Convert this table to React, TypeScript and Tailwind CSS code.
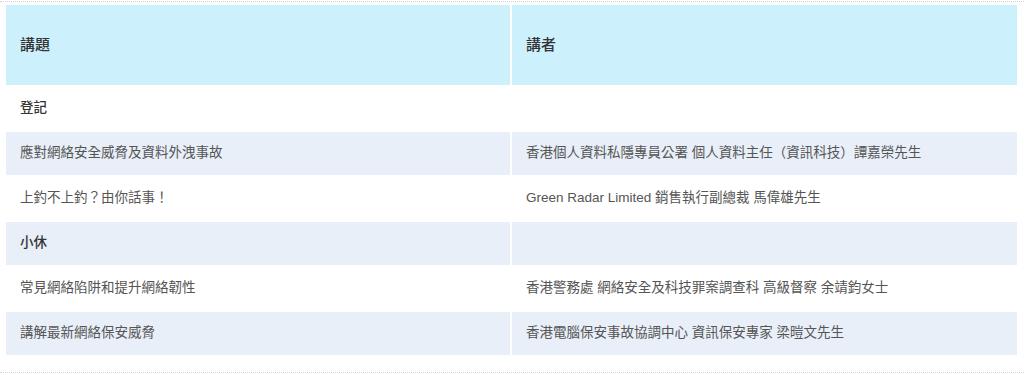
const rows: { topic: string; speaker: string; label?: boolean }[] = [
  { topic: "登記", speaker: "", label: true },
  { topic: "應對網絡安全威脅及資料外洩事故", speaker: "香港個人資料私隱專員公署 個人資料主任（資訊科技）譚嘉榮先生" },
  { topic: "上釣不上釣？由你話事！", speaker: "Green Radar Limited 銷售執行副總裁 馬偉雄先生" },
  { topic: "小休", speaker: "", label: true },
  { topic: "常見網絡陷阱和提升網絡韌性", speaker: "香港警務處 網絡安全及科技罪案調查科 高級督察 余靖鈞女士" },
  { topic: "講解最新網絡保安威脅", speaker: "香港電腦保安事故協調中心 資訊保安專家 梁暟文先生" },
];

export default function App() {
  return (
    <main
      className="h-[375px] w-[1024px] overflow-hidden bg-white pt-px"
      style={{ fontFamily: '"Liberation Sans", "Noto Sans CJK TC", sans-serif' }}
    >
      <div className="border-t border-dotted border-[#d4d4d4]" />
      <table className="ml-[4px] mt-px w-[1015px] table-fixed border-separate border-spacing-[2px]">
        <thead>
          <tr>
            <th className="h-[80px] w-[504px] bg-[#cdf0fd] px-[14px] text-left text-[15px] font-medium text-[#333]">講題</th>
            <th className="h-[80px] bg-[#cdf0fd] px-[14px] text-left text-[15px] font-medium text-[#333]">講者</th>
          </tr>
        </thead>
        <tbody>
          {rows.map((row, i) => (
            <tr key={i} className={i % 2 === 1 ? "bg-[#e8eff8]" : "bg-white"}>
              <td
                className={
                  row.label
                    ? "h-[43px] px-[14px] text-[13.5px] font-medium text-[#333]"
                    : "h-[43px] px-[14px] text-[13.5px] text-[#555]"
                }
              >
                {row.topic}
              </td>
              <td className="h-[43px] px-[14px] text-[13.5px] text-[#555]">{row.speaker}</td>
            </tr>
          ))}
        </tbody>
      </table>
      <div className="mt-[15px] border-t border-dotted border-[#d4d4d4]" />
    </main>
  );
}
